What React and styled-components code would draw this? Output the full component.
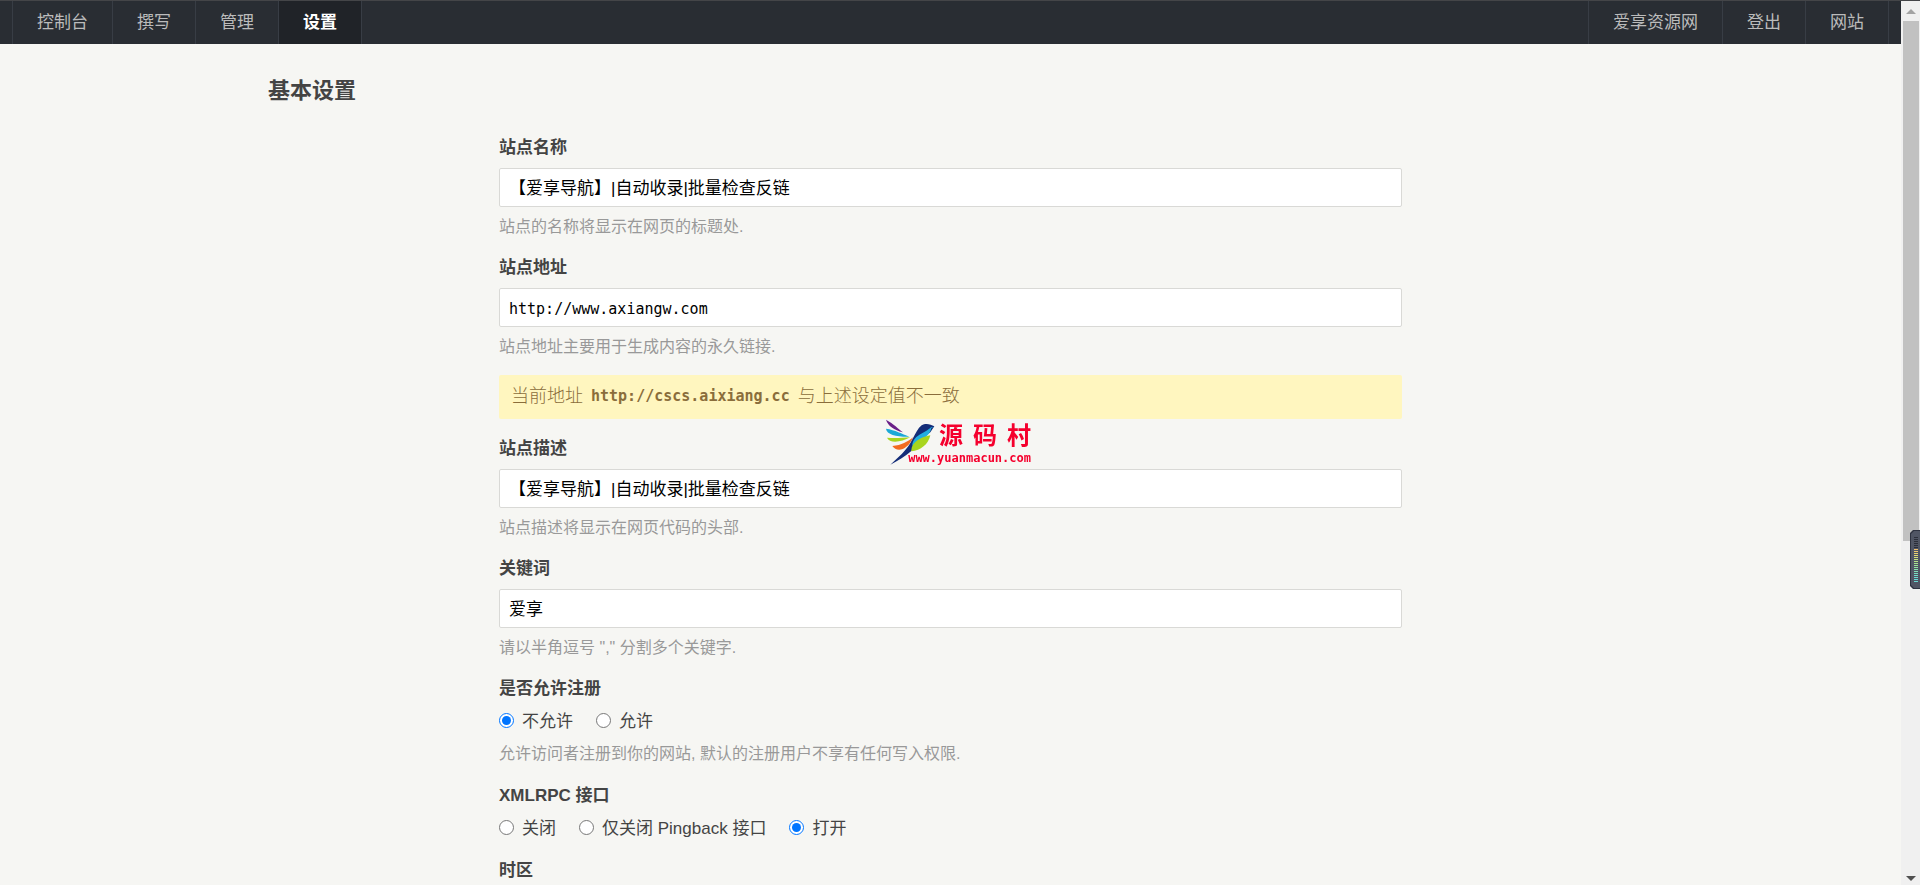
import React, { useState } from 'react';
import styled, { createGlobalStyle } from 'styled-components';

const GlobalStyle = createGlobalStyle`
  * {
    box-sizing: border-box;
  }

  body {
    margin: 0;
    background: #f6f6f3;
    color: #444;
    font-family: "Liberation Sans", "Noto Sans CJK SC", sans-serif;
    font-size: 17px;
    line-height: 24px;
  }
`;

const Screen = styled.div`
  display: flex;
  height: 100vh;
  overflow: hidden;
  border-top: 1px solid #444548;
`;

const Page = styled.div`
  flex: 1;
  min-width: 0;
`;

const Nav = styled.nav`
  display: flex;
  justify-content: space-between;
  padding: 0 12px;
  background: #292d33;
`;

const NavGroup = styled.div`
  display: flex;
  border-left: 1px solid #383d45;
`;

const NavLink = styled.a`
  height: 43px;
  padding: 0 24px;
  border-right: 1px solid #383d45;
  background: ${(props) => (props.$current ? '#202328' : 'transparent')};
  color: ${(props) => (props.$current ? '#fff' : '#bbb')};
  font-weight: ${(props) => (props.$current ? 700 : 400)};
  line-height: 44px;
  text-decoration: none;
  white-space: nowrap;
`;

const Container = styled.main`
  width: 72%;
  max-width: 1365px;
  margin: 0 auto;
  padding-top: 34px;
`;

const Title = styled.h1`
  margin: 0 0 31px;
  font-size: 22px;
  line-height: 26px;
`;

const Form = styled.form`
  width: 67%;
  max-width: 903px;
  margin: 0 auto;
`;

const Field = styled.div`
  margin-bottom: 16px;
`;

const RadioField = styled.fieldset`
  margin: 0 0 17px;
  padding: 0;
  border: 0;
`;

const Label = styled.label`
  display: block;
  margin-bottom: 7px;
  font-weight: 700;
  line-height: 26px;
`;

const TextInput = styled.input`
  display: block;
  width: 100%;
  height: 39px;
  padding: ${(props) => (props.$mono ? '2px 9px 0' : '0 9px 2px')};
  border: 1px solid #d9d9d6;
  border-radius: 2px;
  background: #fff;
  color: #000;
  font-family: ${(props) =>
    props.$mono ? '"DejaVu Sans Mono", monospace' : '"Liberation Sans", "Noto Sans CJK SC", sans-serif'};
  font-size: ${(props) => (props.$mono ? '15px' : '17px')};
`;

const Description = styled.p`
  margin: 8px 0 0;
  color: #999;
  font-size: 16px;
`;

const Notice = styled.p`
  display: flex;
  align-items: center;
  gap: 8px;
  height: 44px;
  margin: 16px 0 17px;
  padding: 0 12px 6px;
  border-radius: 2px;
  background: #fff6bf;
  color: #8a6d3b;
  font-family: "Noto Sans CJK SC", sans-serif;
  font-size: 18px;
  font-weight: 300;

  code {
    padding-top: 4px;
    font-family: "DejaVu Sans Mono", monospace;
    font-size: 15px;
    font-weight: 700;
  }
`;

const Options = styled.div`
  display: flex;
  gap: 23px;
  line-height: 25px;
`;

const Option = styled.label`
  display: flex;
  align-items: center;
  gap: 8px;

  input {
    width: 15px;
    height: 15px;
    margin: 0 0 3px;
  }
`;

const ScrollBar = styled.div`
  display: flex;
  flex-direction: column;
  align-items: center;
  width: 19px;
  background: #f0f0f0;
`;

const ScrollArrow = styled.svg`
  width: 19px;
  height: 20px;
  fill: ${(props) => props.$color};
`;

const ScrollTrack = styled.div`
  flex: 1;
  width: 16px;
`;

const ScrollThumb = styled.div`
  height: 61.6%;
  background: #c1c1c1;
`;

const Meter = styled.svg`
  position: fixed;
  top: 530px;
  right: 0;
  width: 10px;
  height: 59px;
`;

const Watermark = styled.div`
  position: fixed;
  inset: 0;
  width: 148px;
  height: 47px;
  margin: auto;
  padding-right: 3px;
  color: #f5002d;
`;

const Bird = styled.svg`
  position: absolute;
  top: 0;
  left: 0;
  width: 49px;
  height: 46px;
`;

const BrandName = styled.div`
  display: flex;
  justify-content: flex-end;
  gap: 10px;
  font-family: "Noto Sans CJK SC", sans-serif;
  font-size: 24px;
  font-weight: 700;
  line-height: 30px;
`;

const BrandUrl = styled.div`
  position: relative;
  font-family: "DejaVu Sans Mono", monospace;
  font-size: 12px;
  font-weight: 700;
  line-height: 18px;
  text-align: right;
`;

const meterColors = [
  '#2b2e3a', '#2b2e3a', '#2b2e3a', '#2b2e3a', '#2b2e3a', '#2b2e3a',
  '#f0c070', '#efca6e', '#ead470', '#e2dc74', '#d4e07a', '#c4e280', '#b6e388', '#a8e390',
  '#9ce398', '#92e3a2', '#88e2ac', '#80e1b6', '#78e0c0', '#72dfca', '#6cdcd0', '#68dad4', '#68dad4',
];

const TextField = ({ id, label, value, mono, description }) => (
  <Field>
    <Label htmlFor={id}>{label}</Label>
    <TextInput id={id} type="text" defaultValue={value} $mono={mono} />
    <Description>{description}</Description>
  </Field>
);

const RadioGroup = ({ name, label, options, initial, description }) => {
  const [selected, setSelected] = useState(initial);

  return (
    <RadioField aria-labelledby={`${name}-label`}>
      <Label as="div" id={`${name}-label`}>{label}</Label>
      <Options>
        {options.map((option) => (
          <Option key={option}>
            <input
              type="radio"
              name={name}
              checked={selected === option}
              onChange={() => setSelected(option)}
            />
            {option}
          </Option>
        ))}
      </Options>
      {description && <Description>{description}</Description>}
    </RadioField>
  );
};

const App = () => (
  <>
    <GlobalStyle />
    <Screen>
      <Page>
        <Nav>
          <NavGroup>
            <NavLink href="#console">控制台</NavLink>
            <NavLink href="#write">撰写</NavLink>
            <NavLink href="#manage">管理</NavLink>
            <NavLink href="#settings" $current>设置</NavLink>
          </NavGroup>
          <NavGroup>
            <NavLink href="#profile">爱享资源网</NavLink>
            <NavLink href="#logout">登出</NavLink>
            <NavLink href="#site">网站</NavLink>
          </NavGroup>
        </Nav>

        <Container>
          <Title>基本设置</Title>
          <Form>
            <TextField
              id="title"
              label="站点名称"
              value="【爱享导航】|自动收录|批量检查反链"
              description="站点的名称将显示在网页的标题处."
            />
            <TextField
              id="siteUrl"
              label="站点地址"
              value="http://www.axiangw.com"
              mono
              description="站点地址主要用于生成内容的永久链接."
            />
            <Notice>
              <span>当前地址</span>
              <code>http://cscs.aixiang.cc</code>
              <span>与上述设定值不一致</span>
            </Notice>
            <TextField
              id="description"
              label="站点描述"
              value="【爱享导航】|自动收录|批量检查反链"
              description="站点描述将显示在网页代码的头部."
            />
            <TextField
              id="keywords"
              label="关键词"
              value="爱享"
              description={'请以半角逗号 "," 分割多个关键字.'}
            />
            <RadioGroup
              name="allowRegister"
              label="是否允许注册"
              options={['不允许', '允许']}
              initial="不允许"
              description="允许访问者注册到你的网站, 默认的注册用户不享有任何写入权限."
            />
            <RadioGroup
              name="allowXmlRpc"
              label="XMLRPC 接口"
              options={['关闭', '仅关闭 Pingback 接口', '打开']}
              initial="打开"
            />
            <Label as="div">时区</Label>
          </Form>
        </Container>
      </Page>

      <ScrollBar aria-hidden="true">
        <ScrollArrow viewBox="0 0 19 20" $color="#a3a3a3">
          <path d="M5 13 10 8l5 5z" />
        </ScrollArrow>
        <ScrollTrack>
          <ScrollThumb />
        </ScrollTrack>
        <ScrollArrow viewBox="0 0 19 20" $color="#505050">
          <path d="M5 11h10l-5 5z" />
        </ScrollArrow>
      </ScrollBar>
    </Screen>

    <Meter viewBox="0 0 10 59" aria-hidden="true">
      <path d="M10 0H3L0 3v53l3 3h7z" fill="#2e3240" />
      <path d="M10 1H4L1 4v51l3 3h6z" fill="#505564" />
      {meterColors.map((color, i) => (
        <rect key={i} x="4" y={7 + i * 2} width="4" height="1" fill={color} />
      ))}
    </Meter>

    <Watermark>
      <Bird viewBox="48 27 147 138" aria-hidden="true">
        <path d="M48 29C54 48 72 60 99 67 84 56 72 42 48 29z" fill="#6a2088" />
        <path d="M48 56c2 18 34 25 70 24C95 71 76 60 48 56z" fill="#1ba9d6" />
        <path d="M51 83c8 18 42 14 70-1-26 1-44 4-70 1z" fill="#a8d51e" />
        <path d="M67 108c13 20 46 14 62-26-17 14-34 24-62 26z" fill="#f36b21" />
        <path d="M193 49c-12-8-28-10-38-3-12 9-17 23-27 40-8 16-18 30-32 45l-35 33c24-13 45-25 63-41l25-33 32-23z" fill="#142d78" />
        <path d="M192 50c-7 0-11 2-14 6-10 9-28 15-39 25-8 8-13 17-12 26 17-9 29-17 40-26 12-10 15-18 17-27z" fill="#22aee0" />
        <path d="M181 76c-20 4-39 11-51 27-5 7-6 14-6 21 28-3 51-20 57-48z" fill="#a8d51e" />
      </Bird>
      <BrandName>
        <span>源</span>
        <span>码</span>
        <span>村</span>
      </BrandName>
      <BrandUrl>www.yuanmacun.com</BrandUrl>
    </Watermark>
  </>
);

export default App;
